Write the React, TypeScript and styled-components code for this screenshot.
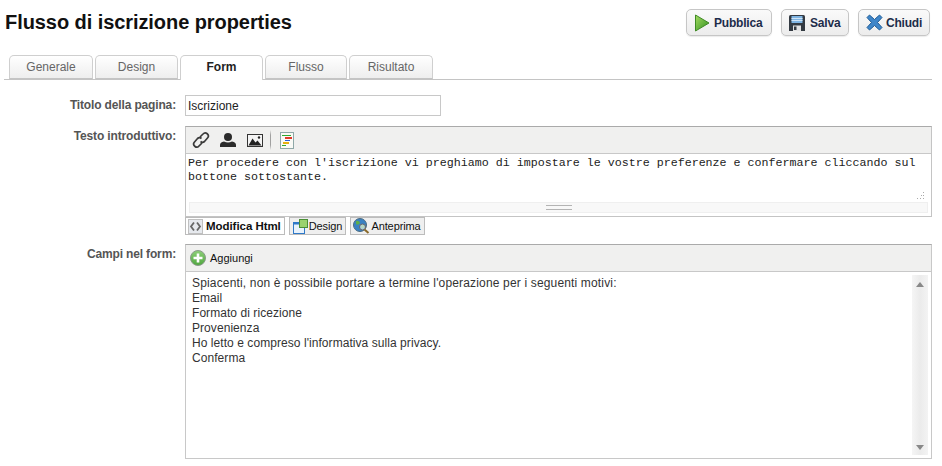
import styled, { createGlobalStyle } from "styled-components";

const GlobalStyle = createGlobalStyle`
  html, body {
    margin: 0;
    padding: 0;
    background: #fff;
    font-family: "Liberation Sans", Arial, sans-serif;
    overflow: hidden;
  }
`;

const Page = styled.div`
  width: 942px;
  height: 466px;
  box-sizing: border-box;
  padding: 9px 10px 0 4px;
  overflow: hidden;
`;

const Header = styled.div`
  display: flex;
  align-items: flex-start;
  justify-content: space-between;
  height: 46px;
`;

const Title = styled.h1`
  margin: 0 0 0 1px;
  font-size: 20px;
  letter-spacing: -0.07px;
  line-height: 26px;
  font-weight: bold;
  color: #111;
`;

const Actions = styled.div`
  display: flex;
  gap: 9px;
  margin-right: 2px;
`;

const ActionButton = styled.button<{ $width: number; $gap: number }>`
  display: flex;
  align-items: center;
  gap: ${(p) => p.$gap}px;
  width: ${(p) => p.$width}px;
  height: 27px;
  box-sizing: border-box;
  padding: 0 0 0 7px;
  border: 1px solid #c6c6c6;
  border-radius: 5px;
  background: linear-gradient(#fafafa, #ececec);
  box-shadow: 0 1px 1px rgba(0, 0, 0, 0.08);
  font-family: inherit;
  font-size: 12px;
  letter-spacing: -0.2px;
  font-weight: bold;
  color: #1d2c4a;
`;

const Tabs = styled.div`
  display: flex;
  gap: 2px;
  height: 25px;
  box-sizing: border-box;
  padding-left: 5px;
  border-bottom: 1px solid #c4c4c4;
`;

const Tab = styled.div<{ $active?: boolean; $width: number }>`
  width: ${(p) => p.$width}px;
  height: ${(p) => (p.$active ? 25 : 24)}px;
  box-sizing: border-box;
  border: 1px solid #cfcfcf;
  border-bottom: ${(p) => (p.$active ? "none" : "1px solid #c4c4c4")};
  border-radius: 5px 5px 0 0;
  background: ${(p) => (p.$active ? "#fff" : "linear-gradient(#ffffff, #eeeeee)")};
  text-align: center;
  font-size: 12px;
  line-height: 23px;
  font-weight: ${(p) => (p.$active ? "bold" : "normal")};
  color: ${(p) => (p.$active ? "#222" : "#666")};
`;

const Form = styled.div`
  display: grid;
  grid-template-columns: 172px 747px;
  column-gap: 9px;
  padding-top: 15px;
`;

const Label = styled.div`
  text-align: right;
  font-size: 12px;
  font-weight: bold;
  letter-spacing: -0.15px;
  line-height: 14px;
  color: #555;
  padding-top: 3px;
`;

const TextInput = styled.div`
  width: 256px;
  height: 21px;
  box-sizing: border-box;
  border: 1px solid #c8c8c8;
  padding-left: 2px;
  font-size: 12px;
  line-height: 20px;
  color: #222;
  margin-bottom: 10px;
`;

const EditorBox = styled.div`
  height: 91px;
  box-sizing: border-box;
  border: 1px solid #c4c4c4;
  border-top-color: #aaa;
`;

const Toolbar = styled.div`
  display: flex;
  align-items: center;
  height: 27px;
  box-sizing: border-box;
  background: #f0f0ef;
  border-bottom: 1px solid #c8c8c8;
`;

const ToolIcon = styled.span<{ $left: number }>`
  display: flex;
  margin-left: ${(p) => p.$left}px;
`;

const ToolDivider = styled.span`
  width: 1px;
  height: 20px;
  margin-left: 7px;
  background: linear-gradient(#f0f0ef, #a0a0a0 25%, #a0a0a0 75%, #f0f0ef);
`;

const CodeArea = styled.div`
  position: relative;
  height: 48px;
  box-sizing: border-box;
  padding: 2px 2px 0;
  font-family: "Liberation Mono", monospace;
  font-size: 11.67px;
  line-height: 14px;
  color: #222;
  white-space: pre;
`;

const Grip = styled.svg`
  position: absolute;
  right: 6px;
  bottom: 2px;
`;

const Splitter = styled.div`
  display: flex;
  align-items: center;
  justify-content: center;
  height: 11px;
  margin: 0 3px 3px 3px;
  box-sizing: border-box;
  border: 1px solid #efefef;
  background: #f8f8f8;
`;

const SplitterHandle = styled.div`
  width: 26px;
  height: 3px;
  border-top: 1px solid #b4b4b4;
  border-bottom: 1px solid #b4b4b4;
`;

const ModeRow = styled.div`
  display: flex;
  gap: 4px;
  margin: 0 0 9px 0;
  height: 18px;
`;

const ModeButton = styled.div<{ $active?: boolean }>`
  display: flex;
  align-items: center;
  gap: ${(p) => (p.$active ? 3 : 1)}px;
  height: 18px;
  box-sizing: border-box;
  padding: 0 3px 0 2px;
  border: 1px solid #bcbcbc;
  background: ${(p) => (p.$active ? "#fff" : "#efefef")};
  font-size: ${(p) => (p.$active ? 11.5 : 11)}px;
  letter-spacing: ${(p) => (p.$active ? "-0.05px" : "-0.1px")};
  font-weight: ${(p) => (p.$active ? "bold" : "normal")};
  color: #111;
`;

const FieldsBox = styled.div`
  height: 215px;
  box-sizing: border-box;
  border: 1px solid #c8c8c8;
  border-top-color: #aaa;
`;

const AddLabel = styled.span`
  margin-left: 4px;
  font-size: 11px;
  color: #111;
`;

const FieldsBody = styled.div`
  display: flex;
  justify-content: space-between;
  height: 186px;
`;

const FieldsList = styled.div`
  padding: 4px 0 0 6px;
  font-size: 12px;
  line-height: 15px;
  color: #333;
`;

const FieldLine = styled.div<{ $lead?: boolean }>`
  letter-spacing: ${(p) => (p.$lead ? 0.16 : 0.06)}px;
`;

const ScrollTrack = styled.div`
  display: flex;
  flex-direction: column;
  align-items: center;
  justify-content: space-between;
  width: 16px;
  margin: 3px 3px 3px 0;
  box-sizing: border-box;
  padding: 7px 0 5px;
  background: linear-gradient(90deg, #f5f5f5, #ebebeb 50%, #f3f3f3);
`;

const Play = () => (
  <svg width="16" height="18" viewBox="0 0 16 18">
    <defs>
      <linearGradient id="playFill" x1="0" y1="0" x2="1" y2="1">
        <stop offset="0" stopColor="#a5dc62" />
        <stop offset="1" stopColor="#2f8f1e" />
      </linearGradient>
    </defs>
    <path d="M1.5 1 L15 9 L1.5 17 Z" fill="url(#playFill)" stroke="#3f8a25" strokeLinejoin="round" />
  </svg>
);

const Floppy = () => (
  <svg width="16" height="16" viewBox="0 0 16 16">
    <path d="M0 1.5 Q0 0 1.5 0 H14.5 Q16 0 16 1.5 V16 H0 Z" fill="#333a42" />
    <rect x="2.5" y="1" width="11" height="7" fill="#7fb4e2" />
    <rect x="2.5" y="3" width="11" height="1" fill="#cfe3f5" />
    <rect x="2.5" y="5" width="11" height="1" fill="#cfe3f5" />
    <rect x="4" y="10.5" width="8" height="5.5" fill="#e4e4e4" />
    <rect x="5" y="11.5" width="2.5" height="3.5" fill="#333a42" />
  </svg>
);

const CloseX = () => (
  <svg width="17" height="17" viewBox="0 0 17 17">
    <path
      d="M3.5 1 L8.5 5.5 L13.5 1 L16 3.5 L11.5 8.5 L16 13.5 L13.5 16 L8.5 11.5 L3.5 16 L1 13.5 L5.5 8.5 L1 3.5 Z"
      fill="#3f86c9"
      stroke="#1f5c96"
      strokeLinejoin="round"
    />
  </svg>
);

const LinkIcon = () => (
  <svg width="18" height="18" viewBox="0 0 18 18" fill="none" stroke="#3a3a3a" strokeWidth="1.7">
    <path d="M8 6 L11 3 A3 3 0 0 1 15.5 7 L12.5 10.5 A3 3 0 0 1 8.5 10.5" />
    <path d="M10 12 L7 15 A3 3 0 0 1 2.5 11 L5.5 7.5 A3 3 0 0 1 9.5 7.5" />
  </svg>
);

const UserIcon = () => (
  <svg width="16" height="14" viewBox="0 0 16 14" fill="#2b2b2b">
    <circle cx="8" cy="4" r="4" />
    <path d="M0 14 V12 Q0 9 4 8.5 Q8 10.5 12 8.5 Q16 9 16 12 V14 Z" />
  </svg>
);

const PictureIcon = () => (
  <svg width="16" height="13" viewBox="0 0 16 13">
    <rect x="0.5" y="0.5" width="15" height="12" fill="#f4f4f4" stroke="#333" />
    <path d="M1.5 11.5 L5.5 4.5 L8.5 8.5 L10.5 6.5 L14.5 11.5 Z" fill="#222" />
    <circle cx="12" cy="3.5" r="1.2" fill="#222" />
  </svg>
);

const SourceIcon = () => (
  <svg width="14" height="17" viewBox="0 0 14 17">
    <rect x="0.5" y="0.5" width="13" height="16" fill="#fafaf6" stroke="#8fa8a8" />
    <rect x="2" y="3" width="9" height="1" fill="#2fa82f" />
    <rect x="5" y="5" width="7" height="2" fill="#e03a2a" />
    <rect x="5" y="8" width="5" height="1" fill="#2f62d8" />
    <rect x="3" y="10" width="6" height="2" fill="#e8b010" />
    <rect x="2" y="13" width="4" height="1" fill="#2fa82f" />
  </svg>
);

const HtmlModeIcon = () => (
  <svg width="15" height="15" viewBox="0 0 15 15">
    <rect x="0.5" y="0.5" width="14" height="14" fill="#e6e9ee" stroke="#c0c0c0" />
    <path d="M6 3.5 L3 7.5 L6 11.5 M9 3.5 L12 7.5 L9 11.5" fill="none" stroke="#666" strokeWidth="1.8" />
  </svg>
);

const DesignModeIcon = () => (
  <svg width="16" height="15" viewBox="0 0 16 15">
    <rect x="1.5" y="3.5" width="11" height="11" fill="#e8f2fc" stroke="#2f79c8" />
    <rect x="1.5" y="3.5" width="11" height="2" fill="#2f79c8" />
    <rect x="7.5" y="0.5" width="8" height="8" fill="#9ad26e" stroke="#4b8f35" />
  </svg>
);

const PreviewModeIcon = () => (
  <svg width="17" height="16" viewBox="0 0 17 16">
    <circle cx="7" cy="7" r="6.5" fill="#3a82c4" stroke="#4a6a80" />
    <path d="M3 3 Q6 2 7 5 Q5 8 3 6 Z M8 7 Q11 6 12 9 Q9 12 8 10 Z" fill="#5fae4a" />
    <circle cx="9.5" cy="9" r="3" fill="#d8e8f2" fillOpacity="0.7" stroke="#666" />
    <path d="M11.5 11.5 L15.5 15" stroke="#8a6a2a" strokeWidth="2" />
  </svg>
);

const AddIcon = () => (
  <svg width="16" height="16" viewBox="0 0 16 16">
    <defs>
      <linearGradient id="addFill" x1="0" y1="0" x2="0" y2="1">
        <stop offset="0" stopColor="#8fd07a" />
        <stop offset="1" stopColor="#4fa63e" />
      </linearGradient>
    </defs>
    <circle cx="8" cy="8" r="7.5" fill="url(#addFill)" stroke="#8a9a8a" />
    <path d="M8 3.5 V12.5 M3.5 8 H12.5" stroke="#fff" strokeWidth="2.6" />
  </svg>
);

const tabs = [
  { name: "Generale", width: 84 },
  { name: "Design", width: 83 },
  { name: "Form", width: 83, active: true },
  { name: "Flusso", width: 82 },
  { name: "Risultato", width: 84 },
];

const fields = [
  "Email",
  "Formato di ricezione",
  "Provenienza",
  "Ho letto e compreso l'informativa sulla privacy.",
  "Conferma",
];

const App = () => (
  <>
    <GlobalStyle />
    <Page>
      <Header>
        <Title>Flusso di iscrizione properties</Title>
        <Actions>
          <ActionButton $width={86} $gap={4}><Play />Pubblica</ActionButton>
          <ActionButton $width={68} $gap={5}><Floppy />Salva</ActionButton>
          <ActionButton $width={72} $gap={3}><CloseX />Chiudi</ActionButton>
        </Actions>
      </Header>
      <Tabs>
        {tabs.map((t) => (
          <Tab key={t.name} $active={t.active} $width={t.width}>{t.name}</Tab>
        ))}
      </Tabs>
      <Form>
        <Label>Titolo della pagina:</Label>
        <TextInput>Iscrizione</TextInput>
        <Label>Testo introduttivo:</Label>
        <div>
          <EditorBox>
            <Toolbar>
              <ToolIcon $left={6}><LinkIcon /></ToolIcon>
              <ToolIcon $left={10}><UserIcon /></ToolIcon>
              <ToolIcon $left={11}><PictureIcon /></ToolIcon>
              <ToolDivider />
              <ToolIcon $left={9}><SourceIcon /></ToolIcon>
            </Toolbar>
            <CodeArea>
              {"Per procedere con l'iscrizione vi preghiamo di impostare le vostre preferenze e confermare cliccando sul\nbottone sottostante."}
              <Grip width="9" height="8" viewBox="0 0 9 8" fill="#aaa">
                <rect x="7" y="0" width="1" height="1" />
                <rect x="5" y="3" width="1" height="1" />
                <rect x="7" y="3" width="1" height="1" />
                <rect x="1" y="6" width="1" height="1" />
                <rect x="4" y="6" width="1" height="1" />
                <rect x="7" y="6" width="1" height="1" />
              </Grip>
            </CodeArea>
            <Splitter><SplitterHandle /></Splitter>
          </EditorBox>
          <ModeRow>
            <ModeButton $active><HtmlModeIcon />Modifica Html</ModeButton>
            <ModeButton><DesignModeIcon />Design</ModeButton>
            <ModeButton><PreviewModeIcon />Anteprima</ModeButton>
          </ModeRow>
        </div>
        <Label>Campi nel form:</Label>
        <FieldsBox>
          <Toolbar>
            <ToolIcon $left={4}><AddIcon /></ToolIcon>
            <AddLabel>Aggiungi</AddLabel>
          </Toolbar>
          <FieldsBody>
            <FieldsList>
              <FieldLine $lead>Spiacenti, non è possibile portare a termine l'operazione per i seguenti motivi:</FieldLine>
              {fields.map((f) => <FieldLine key={f}>{f}</FieldLine>)}
            </FieldsList>
            <ScrollTrack>
              <svg width="8" height="5" viewBox="0 0 8 5"><path d="M4 0 L8 5 H0 Z" fill="#888" /></svg>
              <svg width="8" height="5" viewBox="0 0 8 5"><path d="M0 0 H8 L4 5 Z" fill="#888" /></svg>
            </ScrollTrack>
          </FieldsBody>
        </FieldsBox>
      </Form>
    </Page>
  </>
);

export default App;
